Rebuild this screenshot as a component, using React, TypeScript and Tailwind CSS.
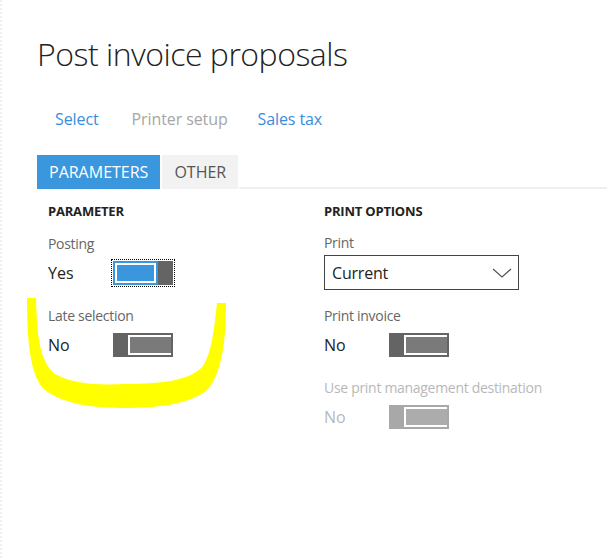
import React from 'react'

const font = { fontFamily: '"Open Sans", "Noto Sans", "Liberation Sans", sans-serif' }

type ToggleProps = {
  on?: boolean
  disabled?: boolean
  focused?: boolean
}

function Toggle({ on = false, disabled = false, focused = false }: ToggleProps) {
  if (on) {
    return (
      <div className={`flex h-[24px] w-[60px] ${focused ? 'outline-1 outline-dotted outline-black outline-offset-1' : ''}`}>
        <div className="flex-1 border-2 border-[#3a96dd] bg-white p-[2px]">
          <div className="h-full bg-[#3a96dd]" />
        </div>
        <div className="w-[15px] bg-[#646464]" />
      </div>
    )
  }
  const dark = disabled ? 'bg-[#a8a8a8]' : 'bg-[#646464]'
  const border = disabled ? 'border-[#a8a8a8]' : 'border-[#646464]'
  const fill = disabled ? 'bg-[#acacac]' : 'bg-[#7a7a7a]'
  return (
    <div className="flex h-[24px] w-[60px]">
      <div className={`w-[15px] ${dark}`} />
      <div className={`flex-1 border-2 border-l-0 ${border}`}>
        <div className={`h-full border-2 border-r-0 border-white ${fill}`} />
      </div>
    </div>
  )
}

function Field({
  label,
  value,
  children,
  disabled = false,
  className = '',
}: {
  label: string
  value: string
  children: React.ReactNode
  disabled?: boolean
  className?: string
}) {
  return (
    <div className={className}>
      <div className={`text-[14px] leading-[20px] tracking-[-0.3px] ${disabled ? 'text-[#b8b8b8]' : 'text-[#666]'}`}>{label}</div>
      <div className="mt-[6px] flex h-[26px] items-center">
        <span className={`w-[65px] text-[16px] ${disabled ? 'text-[#b8b8b8]' : 'text-[#222]'}`}>{value}</span>
        {children}
      </div>
    </div>
  )
}

export default function App() {
  return (
    <div className="relative h-[558px] w-[607px] overflow-hidden bg-white" style={font}>
      {/* faint edge of the window behind */}
      <div className="absolute left-0 top-0 h-full w-[2px] border-l-2 border-dotted border-[#eeeeee]" />

      <div className="pl-[37px] pt-[32px]">
        <h1 className="text-[32px] font-light leading-[44px] tracking-[-0.5px] text-[#222]">Post invoice proposals</h1>

        <div className="ml-[18px] mt-[32px] flex text-[16px] leading-[22px] tracking-[-0.1px]">
          <span className="text-[#3b8ddb]">Select</span>
          <span className="ml-[33px] text-[#a6a6a6]">Printer setup</span>
          <span className="ml-[30px] text-[#3b8ddb]">Sales tax</span>
        </div>

        <div className="mt-[25px] flex items-end">
          <div className="flex h-[34px] items-center bg-[#3a96dd] px-[12px] text-[16px] text-white">PARAMETERS</div>
          <div className="ml-[2px] flex h-[34px] items-center bg-[#f2f2f2] px-[12px] text-[16px] text-[#555]">OTHER</div>
          <div className="ml-[1px] h-[2px] flex-1 bg-[#efefef]" />
        </div>

        <div className="mt-[14px] flex pl-[11px]">
          <div className="w-[276px]">
            <div className="text-[13px] font-bold leading-[16px] tracking-[-0.2px] text-[#222]">PARAMETER</div>
            <Field label="Posting" value="Yes" className="mt-[15px]">
              <Toggle on focused />
            </Field>
            <Field label="Late selection" value="No" className="mt-[20px]">
              <Toggle />
            </Field>
          </div>

          <div className="w-[240px]">
            <div className="text-[13px] font-bold leading-[16px] tracking-[-0.2px] text-[#222]">PRINT OPTIONS</div>
            <div className="mt-[14px] text-[14px] leading-[20px] tracking-[-0.3px] text-[#666]">Print</div>
            <div className="mt-[2px] flex h-[35px] w-[195px] items-center justify-between border border-[#444] pl-[7px] pr-[6px]">
              <span className="text-[16px] tracking-[-0.2px] text-[#222]">Current</span>
              <svg width="20" height="12" viewBox="0 0 20 12" fill="none">
                <path d="M1 2 L10 10 L19 2" stroke="#555" strokeWidth="1.2" />
              </svg>
            </div>
            <Field label="Print invoice" value="No" className="mt-[16px]">
              <Toggle />
            </Field>
            <Field label="Use print management destination" value="No" disabled className="mt-[20px]">
              <Toggle disabled />
            </Field>
          </div>
        </div>
      </div>

      {/* yellow hand-drawn annotation */}
      <svg className="pointer-events-none absolute left-0 top-0" width="607" height="558" viewBox="0 0 607 558">
        <path
          d="M27 298 L36 298 C37 330 38 360 55 374 C75 385 100 385 125 384 C160 384 190 381 203 366 C212 351 214 330 217 303 L226 303 C226 340 222 377 205 392 C185 405 155 408 125 408 C95 408 65 405 45 390 C30 377 27 340 27 298 Z"
          fill="#ffff00"
        />
      </svg>
    </div>
  )
}
